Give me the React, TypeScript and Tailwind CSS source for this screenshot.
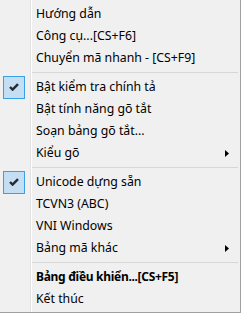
import React from 'react'

type Item =
  | { kind: 'sep' }
  | { kind: 'item'; label: string; checked?: boolean; sub?: boolean; bold?: boolean }

const items: Item[] = [
  { kind: 'item', label: 'Hướng dẫn' },
  { kind: 'item', label: 'Công cụ...[CS+F6]' },
  { kind: 'item', label: 'Chuyển mã nhanh - [CS+F9]' },
  { kind: 'sep' },
  { kind: 'item', label: 'Bật kiểm tra chính tả', checked: true },
  { kind: 'item', label: 'Bật tính năng gõ tắt' },
  { kind: 'item', label: 'Soạn bảng gõ tắt...' },
  { kind: 'item', label: 'Kiểu gõ', sub: true },
  { kind: 'sep' },
  { kind: 'item', label: 'Unicode dựng sẵn', checked: true },
  { kind: 'item', label: 'TCVN3 (ABC)' },
  { kind: 'item', label: 'VNI Windows' },
  { kind: 'item', label: 'Bảng mã khác', sub: true },
  { kind: 'sep' },
  { kind: 'item', label: 'Bảng điều khiển...[CS+F5]', bold: true },
  { kind: 'item', label: 'Kết thúc' },
]

const Check = () => (
  <div className="w-[22px] h-[23px] ml-[3px] flex items-center justify-center bg-[#c4def3] border border-[#3c9ee4]">
    <svg width="10" height="8" viewBox="0 0 10 8">
      <path d="M1 4 L3.6 6.6 L9 1.2" fill="none" stroke="#2b2b2b" strokeWidth="2.4" />
    </svg>
  </div>
)

export default function App() {
  return (
    <div
      className="w-[241px] h-[313px] bg-[#f0f0f0] border-r border-b border-[#a0a0a0] pt-[3px] text-[12.3px] text-black bg-[linear-gradient(to_right,transparent_30px,#e2e2e2_30px,#e2e2e2_31px,#ffffff_31px,#ffffff_32px,transparent_32px)]"
      style={{ fontFamily: '"Noto Sans", "Open Sans", sans-serif' }}
    >
      {items.map((it, i) =>
        it.kind === 'sep' ? (
          <div key={i} className="h-[7px] flex items-center">
            <div className="h-px flex-1 ml-[32px] mr-[2px] bg-[#d7d7d7]" />
          </div>
        ) : (
          <div key={i} className="h-[22px] flex items-center">
            <div className="w-[36px] shrink-0 flex items-center">
              {it.checked && <Check />}
            </div>
            <span className={`flex-1 leading-none ${it.bold ? 'font-bold text-[12px] tracking-[-0.3px]' : ''}`}>{it.label}</span>
            {it.sub && (
              <svg className="mr-[11px]" width="4" height="7" viewBox="0 0 4 7">
                <path d="M0 0 L4 3.5 L0 7 Z" fill="#000" />
              </svg>
            )}
          </div>
        )
      )}
    </div>
  )
}
